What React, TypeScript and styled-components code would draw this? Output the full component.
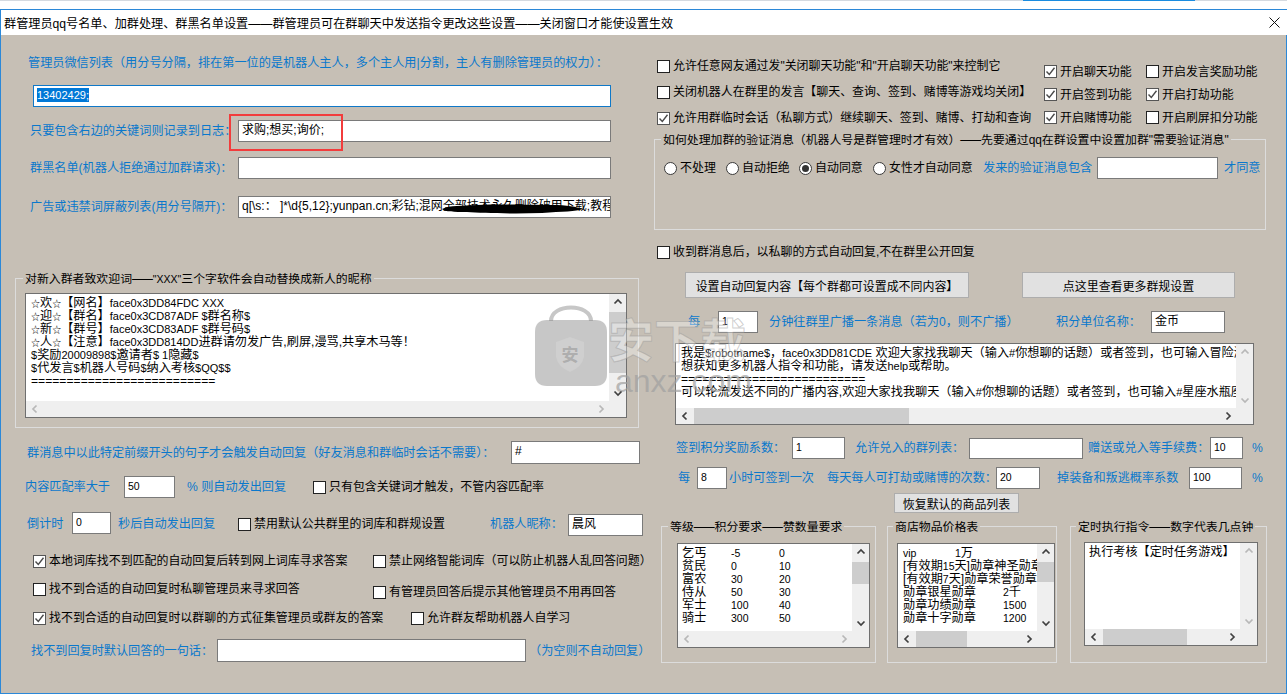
import React, { FC, ReactNode } from 'react';
import styled, { createGlobalStyle } from 'styled-components';

const BLUE_TEXT = '#0a78cc';
const PANEL = '#c6bfb5';
const BAR = '#efefef';

const GlobalStyle = createGlobalStyle`
  html, body {
    margin: 0;
    background: #fff;
    overflow: hidden;
  }
  body {
    font-family: "Liberation Sans", "Noto Sans CJK SC", sans-serif;
    font-size: 12.15px;
    color: #000;
  }
`;

const Window = styled.div`
  position: relative;
  width: 1287px;
  height: 694px;
  overflow: hidden;
  display: flex;
  flex-direction: column;
`;
const TabStrip = styled.div`
  display: flex;
  height: 1px;
  background: #d5dae0;
`;
const ActiveTab = styled.div`
  width: 172px;
  margin-left: 1023px;
  background: #1a8ce0;
`;
const TitleBar = styled.div`
  height: 25px;
  margin-top: 8px;
  border-top: 1px solid #2b88d8;
  border-left: 1px solid #2b88d8;
  padding: 0 7px 0 3px;
  display: flex;
  align-items: center;
  justify-content: space-between;
  white-space: nowrap;
`;
const Body = styled.div`
  flex: 1;
  display: flex;
  background: ${PANEL};
  border-left: 1px solid #2b88d8;
  border-bottom: 1px solid #2b88d8;
  border-right: 1px solid #2b88d8;
`;
const Column = styled.div<{ $w: number }>`
  width: ${p => p.$w}px;
  flex: none;
  display: flex;
  flex-direction: column;
`;
const Row = styled.div<{ $h: number; $mt: number; $pl?: number }>`
  display: flex;
  align-items: center;
  flex: none;
  height: ${p => p.$h}px;
  margin-top: ${p => p.$mt}px;
  padding-left: ${p => p.$pl ?? 0}px;
  white-space: nowrap;
`;
const Label = styled.span<{ $w?: number; $ml?: number; $dark?: boolean }>`
  flex: none;
  width: ${p => (p.$w ? `${p.$w}px` : 'auto')};
  margin-left: ${p => p.$ml ?? 0}px;
  color: ${p => (p.$dark ? '#000' : BLUE_TEXT)};
  font-size: ${p => (p.$dark ? '11.95px' : 'inherit')};
  line-height: 16px;
`;
const Field = styled.div<{ $w: number; $ml?: number; $h?: number; $focus?: boolean; $dy?: number }>`
  position: relative;
  flex: none;
  box-sizing: border-box;
  width: ${p => p.$w}px;
  height: ${p => p.$h ?? 22}px;
  margin-left: ${p => p.$ml ?? 0}px;
  margin-top: ${p => p.$dy ?? 0}px;
  padding: 2px 3px;
  background: #fff;
  border: 1px solid ${p => (p.$focus ? '#0f78c8' : '#7a7a7a')};
  font-size: 12px;
  line-height: 15px;
  overflow: hidden;
  white-space: nowrap;
`;
const Selected = styled.span`
  background: #0078d7;
  color: #fff;
`;
// latin runs in memos and number boxes sit a size below the chinese text
const Latin = styled.span<{ $size?: number }>`
  font-size: ${p => p.$size ?? 11}px;
`;
const Scribble = styled.svg`
  position: absolute;
  left: 203px;
  top: 7px;
`;
const Highlight = styled.div`
  position: absolute;
  left: 229px;
  top: 114px;
  width: 114px;
  height: 37px;
  box-sizing: border-box;
  border: 2px solid #f23c3c;
  pointer-events: none;
`;

const CheckWrap = styled.div<{ $dy?: number; $ml?: number }>`
  display: flex;
  align-items: center;
  flex: none;
  margin-top: ${p => p.$dy ?? 0}px;
  margin-left: ${p => p.$ml ?? 0}px;
`;
const Box = styled.span<{ $checked?: boolean }>`
  flex: none;
  box-sizing: border-box;
  display: flex;
  align-items: center;
  justify-content: center;
  width: 13px;
  height: 13px;
  margin-right: 3px;
  background: #fff;
  border: 1px solid ${p => (p.$checked ? '#555' : '#222')};
`;
const Check: FC<{ on?: boolean; w?: number; dy?: number; ml?: number; children: ReactNode }> = ({
  on,
  w,
  dy,
  ml,
  children,
}) => (
  <CheckWrap $dy={dy} $ml={ml}>
    <Box $checked={on}>
      {on && (
        <svg width="11" height="11" viewBox="0 0 11 11">
          <path d="M1.5 5.5 L4.3 8.5 L9.5 1.8" fill="none" stroke="#4a4a4a" strokeWidth="1.4" />
        </svg>
      )}
    </Box>
    <Label $dark $w={w}>{children}</Label>
  </CheckWrap>
);
const RadioDot = styled.span`
  flex: none;
  box-sizing: border-box;
  display: flex;
  align-items: center;
  justify-content: center;
  width: 13px;
  height: 13px;
  margin-right: 3px;
  border-radius: 50%;
  background: #fff;
  border: 1px solid #3a3a3a;
`;
const RadioPip = styled.span`
  width: 7px;
  height: 7px;
  border-radius: 50%;
  background: #333;
`;
const Radio: FC<{ on?: boolean; w: number; children: ReactNode }> = ({ on, w, children }) => (
  <>
    <RadioDot>{on && <RadioPip />}</RadioDot>
    <Label $dark $w={w}>{children}</Label>
  </>
);

const Group = styled.div<{ $x?: number; $w: number; $h: number; $mt?: number }>`
  position: relative;
  flex: none;
  box-sizing: border-box;
  width: ${p => p.$w}px;
  height: ${p => p.$h}px;
  margin-left: ${p => p.$x ?? 0}px;
  margin-top: ${p => p.$mt ?? 0}px;
  border: 1px solid #dcdcdc;
`;
const Legend = styled.span<{ $x: number }>`
  position: absolute;
  top: -8px;
  left: ${p => p.$x}px;
  padding: 0 2px;
  background: ${PANEL};
  font-size: 11.9px;
  line-height: 16px;
  white-space: nowrap;
`;
const Dash = styled.span`
  letter-spacing: -3px;
  margin-right: 3px;
`;

const Memo = styled.div<{ $w: number; $h: number; $x: number; $y: number }>`
  box-sizing: border-box;
  width: ${p => p.$w}px;
  height: ${p => p.$h}px;
  margin: ${p => p.$y}px 0 0 ${p => p.$x}px;
  display: grid;
  grid-template-columns: minmax(0, 1fr) 17px;
  grid-template-rows: minmax(0, 1fr) 16px;
  background: #fff;
  border: 1px solid #6f6f6f;
`;
const MemoText = styled.div<{ $pl?: number }>`
  padding: 3px 0 0 ${p => p.$pl ?? 5}px;
  line-height: 13px;
  white-space: nowrap;
  overflow: hidden;
  min-width: 0;
`;
const VBar = styled.div`
  display: flex;
  flex-direction: column;
  align-items: center;
  justify-content: space-between;
  background: ${BAR};
  position: relative;
  overflow: hidden;
`;
const HBar = styled.div`
  display: flex;
  align-items: center;
  justify-content: space-between;
  background: ${BAR};
  position: relative;
  overflow: hidden;
`;
const Corner = styled.div`
  background: ${BAR};
`;
const VThumb = styled.div<{ $top: number; $h: number }>`
  position: absolute;
  left: 0;
  right: 0;
  top: ${p => p.$top}px;
  height: ${p => p.$h}px;
  background: #cdcdcd;
`;
const HThumb = styled.div<{ $left: number; $w: number }>`
  position: absolute;
  top: 0;
  bottom: 0;
  left: ${p => p.$left}px;
  width: ${p => p.$w}px;
  background: #cdcdcd;
`;

const ArrowBox = styled.span`
  position: relative;
  z-index: 1;
  display: flex;
  width: 17px;
  height: 16px;
  align-items: center;
  justify-content: center;
`;
const Arrow: FC<{ dir: 'up' | 'down' | 'left' | 'right'; faint?: boolean }> = ({ dir, faint }) => {
  const d = {
    up: 'M1.5 6.5 L5 3 L8.5 6.5',
    down: 'M1.5 3.5 L5 7 L8.5 3.5',
    left: 'M6.5 1.5 L3 5 L6.5 8.5',
    right: 'M3.5 1.5 L7 5 L3.5 8.5',
  }[dir];
  return (
    <ArrowBox>
      <svg width="10" height="10" viewBox="0 0 10 10">
        <path d={d} fill="none" stroke={faint ? '#b8b8b8' : '#404040'} strokeWidth="1.7" />
      </svg>
    </ArrowBox>
  );
};

const Scrolled: FC<{
  vThumb?: [number, number];
  hThumb?: [number, number];
  vFaint?: boolean;
  hFaint?: boolean;
}> = ({ vThumb, hThumb, vFaint, hFaint }) => (
  <>
    <VBar>
      {vThumb && <VThumb $top={vThumb[0]} $h={vThumb[1]} />}
      <Arrow dir="up" faint={vFaint} />
      <Arrow dir="down" faint={vFaint} />
    </VBar>
    <HBar>
      {hThumb && <HThumb $left={hThumb[0]} $w={hThumb[1]} />}
      <Arrow dir="left" faint={hFaint} />
      <Arrow dir="right" faint={hFaint} />
    </HBar>
    <Corner />
  </>
);

const Star = styled.span`
  font-size: 9px;
`;
const Line = styled.div`
  height: 13px;
`;
const Cell = styled.span<{ $w: number }>`
  display: inline-block;
  width: ${p => p.$w}px;
`;
const Btn = styled.div<{ $w: number; $ml: number; $h: number }>`
  flex: none;
  box-sizing: border-box;
  display: flex;
  align-items: center;
  justify-content: center;
  width: ${p => p.$w}px;
  height: ${p => p.$h}px;
  margin-left: ${p => p.$ml}px;
  background: #e1e1e1;
  border: 1px solid #adadad;
  font-size: 11.95px;
`;
const TopChecks = styled.div`
  display: flex;
  margin-top: 18px;
`;
const CheckStack = styled.div`
  width: 387px;
  flex: none;
  display: flex;
  flex-direction: column;
  padding-left: 12px;
`;
const FeatureGrid = styled.div`
  display: grid;
  grid-template-columns: 102px 110px;
  grid-auto-rows: 23px;
  margin-top: 7px;
  align-items: center;
  white-space: nowrap;
`;
const GroupRow = styled.div`
  display: flex;
  margin-top: 13px;
`;
const Watermark = styled.div`
  position: absolute;
  left: 535px;
  top: 305px;
  width: 230px;
  height: 95px;
  pointer-events: none;
`;
const WatermarkName = styled.span`
  position: absolute;
  left: 73px;
  top: 8px;
  font-size: 46px;
  line-height: 56px;
  font-weight: 700;
  color: rgba(255, 255, 255, 0.35);
  -webkit-text-stroke: 1px rgba(150, 150, 150, 0.45);
  white-space: nowrap;
`;
const WatermarkUrl = styled.span`
  position: absolute;
  left: 80px;
  top: 58px;
  font-size: 32px;
  line-height: 36px;
  color: rgba(160, 160, 160, 0.7);
  white-space: nowrap;
`;

const App: FC = () => (
  <Window>
    <GlobalStyle />
    <TabStrip>
      <ActiveTab />
    </TabStrip>
    <TitleBar>
      <span>群管理员qq号名单、加群处理、群黑名单设置——群管理员可在群聊天中发送指令更改这些设置——关闭窗口才能使设置生效</span>
      <svg width="11" height="11" viewBox="0 0 11 11">
        <path d="M0.5 0.5 L10.5 10.5 M10.5 0.5 L0.5 10.5" stroke="#111" strokeWidth="1" />
      </svg>
    </TitleBar>
    <Body>
      <Column $w={644}>
        <Row $h={16} $mt={20} $pl={27}>
          <Label>管理员微信列表（用分号分隔，排在第一位的是机器人主人，多个主人用|分割，主人有删除管理员的权力）：</Label>
        </Row>
        <Row $h={22} $mt={14} $pl={32}>
          <Field $w={578} $focus>
            <Selected><Latin>13402429;</Latin></Selected>
          </Field>
        </Row>
        <Row $h={22} $mt={13} $pl={29}>
          <Label $w={208}>只要包含右边的关键词则记录到日志：</Label>
          <Field $w={373}>求购;想买;询价;</Field>
        </Row>
        <Row $h={22} $mt={15} $pl={29}>
          <Label $w={208}>群黑名单(机器人拒绝通过加群请求)：</Label>
          <Field $w={373} />
        </Row>
        <Row $h={22} $mt={17} $pl={29}>
          <Label $w={208}>广告或违禁词屏蔽列表(用分号隔开)：</Label>
          <Field $w={373}>
            q[\s:： ]*\d{'{'}5,12{'}'};yunpan.cn;彩钻;混网全部技术永久删除破甲下载;教程
            <Scribble width="140" height="10" viewBox="0 0 140 10">
              <path d="M0 5 C8 1 20 2 35 1 C60 0 90 1 110 1 C125 1 135 3 140 5 C135 8 120 7 100 9 C70 10 40 9 25 8 C12 8 3 8 0 5 Z" fill="#000" />
            </Scribble>
          </Field>
        </Row>
        <Group $x={14} $w={624} $h={150} $mt={60}>
          <Legend $x={7}>对新入群者致欢迎词<Dash>——</Dash><Latin $size={10.5}>"XXX"</Latin>三个字软件会自动替换成新人的昵称</Legend>
          <Memo $w={602} $h={125} $x={9} $y={14}>
            <MemoText>
              <Line><Star>☆</Star>欢<Star>☆</Star>【网名】<Latin>face0x3DD84FDC XXX</Latin></Line>
              <Line><Star>☆</Star>迎<Star>☆</Star>【群名】<Latin>face0x3CD87ADF $</Latin>群名称<Latin>$</Latin></Line>
              <Line><Star>☆</Star>新<Star>☆</Star>【群号】<Latin>face0x3CD83ADF $</Latin>群号码<Latin>$</Latin></Line>
              <Line><Star>☆</Star>人<Star>☆</Star>【注意】<Latin>face0x3DD814DD</Latin>进群请勿发广告,刷屏,漫骂,共享木马等！</Line>
              <Line><Latin>$</Latin>奖励<Latin>20009898$</Latin>邀请者<Latin>$ 1</Latin>隐藏<Latin>$</Latin></Line>
              <Line><Latin>$</Latin>代发言<Latin>$</Latin>机器人号码<Latin>$</Latin>纳入考核<Latin>$QQ$$</Latin></Line>
              <Line>==========================</Line>
            </MemoText>
            <Scrolled vThumb={[18, 61]} hFaint />
          </Memo>
        </Group>
        <Row $h={23} $mt={13} $pl={26}>
          <Label $w={484}>群消息中以此特定前缀开头的句子才会触发自动回复（好友消息和群临时会话不需要）：</Label>
          <Field $w={129} $h={23}>#</Field>
        </Row>
        <Row $h={22} $mt={12} $pl={24}>
          <Label $w={99}>内容匹配率大于</Label>
          <Field $w={51}><Latin $size={10.5}>50</Latin></Field>
          <Label $w={126} $ml={12}>% 则自动发出回复</Label>
          <Check>只有包含关键词才触发，不管内容匹配率</Check>
        </Row>
        <Row $h={24} $mt={14} $pl={26}>
          <Label $w={45}>倒计时</Label>
          <Field $w={39} $dy={-2}><Latin $size={10.5}>0</Latin></Field>
          <Label $w={120} $ml={7}>秒后自动发出回复</Label>
          <Check w={236}>禁用默认公共群里的词库和群规设置</Check>
          <Label $w={78}>机器人昵称：</Label>
          <Field $w={75} $dy={2}>晨风</Field>
        </Row>
        <Row $h={16} $mt={17} $pl={32}>
          <Check on w={324}>本地词库找不到匹配的自动回复后转到网上词库寻求答案</Check>
          <Check>禁止网络智能词库（可以防止机器人乱回答问题）</Check>
        </Row>
        <Row $h={18} $mt={12} $pl={32}>
          <Check w={324} dy={-2}>找不到合适的自动回复时私聊管理员来寻求回答</Check>
          <Check dy={4}>有管理员回答后提示其他管理员不用再回答</Check>
        </Row>
        <Row $h={16} $mt={11} $pl={32}>
          <Check on w={362}>找不到合适的自动回复时以群聊的方式征集管理员或群友的答案</Check>
          <Check>允许群友帮助机器人自学习</Check>
        </Row>
        <Row $h={23} $mt={13} $pl={30}>
          <Label $w={186}>找不到回复时默认回答的一句话：</Label>
          <Field $w={309} $h={23} />
          <Label $ml={3}>（为空则不自动回复）</Label>
        </Row>
      </Column>
      <Column $w={641}>
        <TopChecks>
          <CheckStack>
            <Row $h={26} $mt={0}>
              <Check>允许任意网友通过发"关闭聊天功能"和"开启聊天功能"来控制它</Check>
            </Row>
            <Row $h={26} $mt={0}>
              <Check>关闭机器人在群里的发言【聊天、查询、签到、赌博等游戏均关闭】</Check>
            </Row>
            <Row $h={26} $mt={0}>
              <Check on>允许用群临时会话（私聊方式）继续聊天、签到、赌博、打劫和查询</Check>
            </Row>
          </CheckStack>
          <FeatureGrid>
            <Check on>开启聊天功能</Check>
            <Check>开启发言奖励功能</Check>
            <Check on>开启签到功能</Check>
            <Check on>开启打劫功能</Check>
            <Check on>开启赌博功能</Check>
            <Check>开启刷屏扣分功能</Check>
          </FeatureGrid>
        </TopChecks>
        <Group $x={9} $w={612} $h={91} $mt={8}>
          <Legend $x={6}>如何处理加群的验证消息（机器人号是群管理时才有效）<Dash>——</Dash>先要通过qq在群设置中设置加群"需要验证消息"</Legend>
          <Row $h={22} $mt={17} $pl={9}>
            <Radio w={46}>不处理</Radio>
            <Radio w={57}>自动拒绝</Radio>
            <Radio on w={58}>自动同意</Radio>
            <Radio w={94}>女性才自动同意</Radio>
            <Label $w={114}>发来的验证消息包含</Label>
            <Field $w={121} />
            <Label $ml={6}>才同意</Label>
          </Row>
        </Group>
        <Row $h={16} $mt={14} $pl={12}>
          <Check>收到群消息后，以私聊的方式自动回复,不在群里公开回复</Check>
        </Row>
        <Row $h={26} $mt={12}>
          <Btn $w={284} $ml={40} $h={26}>设置自动回复内容【每个群都可设置成不同内容】</Btn>
          <Btn $w={213} $ml={53} $h={26}>点这里查看更多群规设置</Btn>
        </Row>
        <Row $h={22} $mt={13} $pl={43}>
          <Label $w={30}>每</Label>
          <Field $w={40}><Latin $size={10.5}>1</Latin></Field>
          <Label $w={287} $ml={11}>分钟往群里广播一条消息（若为0，则不广播）</Label>
          <Label $w={95}>积分单位名称：</Label>
          <Field $w={74}>金币</Field>
        </Row>
        <Memo $w={579} $h={82} $x={30} $y={10}>
          <MemoText>
            <Line>我是<Latin>$robotname$</Latin>，<Latin>face0x3DD81CDE</Latin> 欢迎大家找我聊天（输入<Latin>#</Latin>你想聊的话题）或者签到，也可输入冒险游戏开始游戏</Line>
            <Line>想获知更多机器人指令和功能，请发送<Latin>help</Latin>或帮助。</Line>
            <Line>==========================</Line>
            <Line>可以轮流发送不同的广播内容,欢迎大家找我聊天（输入<Latin>#</Latin>你想聊的话题）或者签到，也可输入<Latin>#</Latin>星座水瓶座查询运势</Line>
          </MemoText>
          <Scrolled hThumb={[18, 215]} vFaint />
        </Memo>
        <Row $h={22} $mt={12} $pl={31}>
          <Label $w={116}>签到积分奖励系数：</Label>
          <Field $w={53}><Latin $size={10.5}>1</Latin></Field>
          <Label $w={114} $ml={10}>允许兑入的群列表：</Label>
          <Field $w={114} $h={21}></Field>
          <Label $w={122} $ml={5}>赠送或兑入等手续费：</Label>
          <Field $w={33}><Latin $size={10.5}>10</Latin></Field>
          <Label $ml={9}>%</Label>
        </Row>
        <Row $h={22} $mt={8} $pl={33}>
          <Label $w={19}>每</Label>
          <Field $w={30}><Latin $size={10.5}>8</Latin></Field>
          <Label $w={98} $ml={2}>小时可签到一次</Label>
          <Label $w={169}>每天每人可打劫或赌博的次数：</Label>
          <Field $w={44}><Latin $size={10.5}>20</Latin></Field>
          <Label $w={132} $ml={17}>掉装备和叛逃概率系数</Label>
          <Field $w={53}><Latin $size={10.5}>100</Latin></Field>
          <Label $ml={10}>%</Label>
        </Row>
        <Row $h={20} $mt={4}>
          <Btn $w={125} $ml={249} $h={20}>恢复默认的商品列表</Btn>
        </Row>
        <GroupRow>
          <Group $x={16} $w={215} $h={137}>
            <Legend $x={6}>等级<Dash>——</Dash>积分要求<Dash>——</Dash>赞数量要求</Legend>
            <Memo $w={193} $h={105} $x={15} $y={16}>
              <MemoText $pl={4}>
                <Line><Cell $w={49}>乞丐</Cell><Cell $w={48}><Latin $size={10.5}>-5</Latin></Cell><Latin $size={10.5}>0</Latin></Line>
                <Line><Cell $w={49}>贫民</Cell><Cell $w={48}><Latin $size={10.5}>0</Latin></Cell><Latin $size={10.5}>10</Latin></Line>
                <Line><Cell $w={49}>富农</Cell><Cell $w={48}><Latin $size={10.5}>30</Latin></Cell><Latin $size={10.5}>20</Latin></Line>
                <Line><Cell $w={49}>侍从</Cell><Cell $w={48}><Latin $size={10.5}>50</Latin></Cell><Latin $size={10.5}>30</Latin></Line>
                <Line><Cell $w={49}>军士</Cell><Cell $w={48}><Latin $size={10.5}>100</Latin></Cell><Latin $size={10.5}>40</Latin></Line>
                <Line><Cell $w={49}>骑士</Cell><Cell $w={48}><Latin $size={10.5}>300</Latin></Cell><Latin $size={10.5}>50</Latin></Line>
              </MemoText>
              <Scrolled vThumb={[18, 22]} hFaint />
            </Memo>
          </Group>
          <Group $x={11} $w={170} $h={137}>
            <Legend $x={5}>商店物品价格表</Legend>
            <Memo $w={158} $h={105} $x={9} $y={16}>
              <MemoText $pl={5}>
                <Line><Cell $w={52}><Latin $size={10.5}>vip</Latin></Cell><Latin $size={10.5}>1</Latin>万</Line>
                <Line>[有效期<Latin $size={10.5}>15</Latin>天]勋章神圣勋章</Line>
                <Line>[有效期<Latin $size={10.5}>7</Latin>天]勋章荣誉勋章</Line>
                <Line><Cell $w={100}>勋章银星勋章</Cell><Latin $size={10.5}>2</Latin>千</Line>
                <Line><Cell $w={100}>勋章功绩勋章</Cell><Latin $size={10.5}>1500</Latin></Line>
                <Line><Cell $w={100}>勋章十字勋章</Cell><Latin $size={10.5}>1200</Latin></Line>
              </MemoText>
              <Scrolled vThumb={[18, 20]} hThumb={[18, 51]} />
            </Memo>
          </Group>
          <Group $x={13} $w={197} $h={137}>
            <Legend $x={5}>定时执行指令<Dash>——</Dash>数字代表几点钟</Legend>
            <Memo $w={174} $h={104} $x={13} $y={15}>
              <MemoText $pl={4}>
                <Line>执行考核【定时任务游戏】</Line>
              </MemoText>
              <Scrolled hThumb={[18, 84]} vFaint />
            </Memo>
          </Group>
        </GroupRow>
      </Column>
    </Body>
    <Highlight />
    <Watermark>
      <svg width="72" height="82" viewBox="0 0 72 82">
        <path d="M16 16 C16 -2 56 -2 56 16" fill="none" stroke="rgba(130,130,130,0.45)" strokeWidth="4" />
        <path d="M12 15 H60 Q72 15 72 27 V69 Q72 81 60 81 H12 Q0 81 0 69 V27 Q0 15 12 15 Z" fill="rgba(130,130,130,0.45)" />
        <path d="M35 32 L49 37 V52 Q47 62 35 67 Q23 62 21 52 V37 Z" fill="rgba(255,255,255,0.14)" />
        <text x="35" y="56" fontSize="17" fontWeight="700" textAnchor="middle" fill="rgba(120,120,120,0.4)">安</text>
      </svg>
      <WatermarkName>安下载</WatermarkName>
      <WatermarkUrl>anxz.com</WatermarkUrl>
    </Watermark>
  </Window>
);

export default App;
